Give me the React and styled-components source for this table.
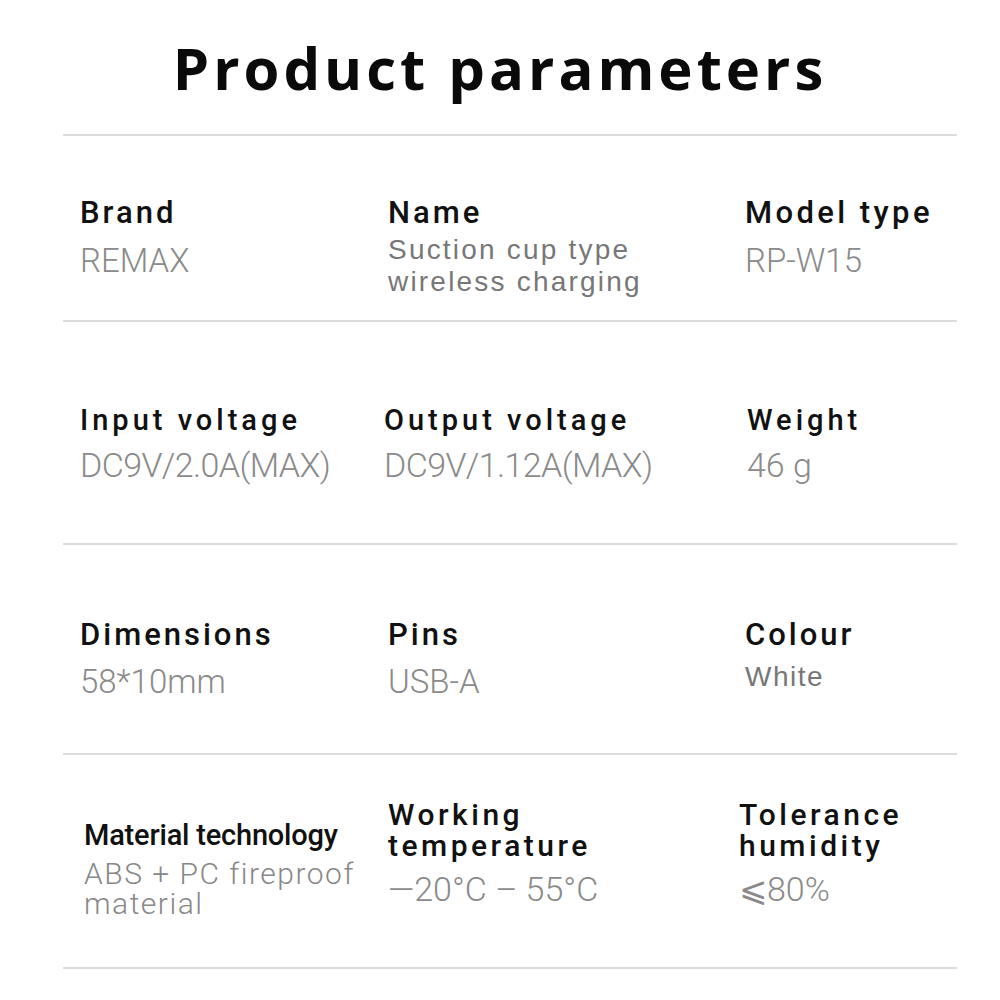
import React from "react";
import styled, { createGlobalStyle } from "styled-components";

const GlobalStyle = createGlobalStyle`
  html, body {
    margin: 0;
    padding: 0;
    background: #ffffff;
  }
`;

const Page = styled.div`
  width: 1000px;
  height: 1000px;
  background: #fff;
  overflow: hidden;
`;

const Title = styled.h1`
  margin: 0;
  padding-top: 32px;
  height: 134px;
  box-sizing: border-box;
  text-align: center;
  font-family: "Open Sans", "Noto Sans", sans-serif;
  font-weight: 700;
  font-size: 58px;
  line-height: 72px;
  letter-spacing: 4px;
  color: #0a0a0a;
`;

const Table = styled.div`
  margin: 0 43px 0 63px;
  border-bottom: 2px solid #dcdcdc;
`;

const Row = styled.div`
  display: grid;
  grid-template-columns: 308px 357px 1fr;
  height: ${(p) => p.$height}px;
  box-sizing: border-box;
  padding: ${(p) => p.$pad}px 0 0 17px;
  border-top: 2px solid #dcdcdc;
  align-items: start;
`;

const Cell = styled.div`
  display: flex;
  flex-direction: column;
  margin-top: ${(p) => p.$offset || 0}px;
  margin-left: ${(p) => p.$shift || 0}px;
`;

const Label = styled.div`
  font-family: Roboto, "Liberation Sans", Arial, sans-serif;
  font-size: ${(p) => p.$size || 31}px;
  line-height: ${(p) => p.$lh || 38}px;
  letter-spacing: ${(p) => p.$spacing ?? 3}px;
  font-weight: 500;
  color: #111;
  white-space: pre-line;
`;

const Value = styled.div`
  margin-top: ${(p) => p.$gap || 0}px;
  font-family: ${(p) =>
    p.$plain ? `"Liberation Sans", Arial, sans-serif` : `Roboto, "Noto Sans", sans-serif`};
  font-weight: ${(p) => (p.$plain ? 400 : 300)};
  font-size: ${(p) => p.$size || 33}px;
  line-height: ${(p) => p.$lh || 40}px;
  letter-spacing: ${(p) => p.$spacing ?? 0}px;
  color: ${(p) => p.$color || "#8a8a8a"};
  white-space: pre-line;
`;

const rows = [
  {
    height: 186,
    pad: 58,
    cells: [
      { label: "Brand", value: "REMAX", gap: 9 },
      {
        label: "Name",
        value: "Suction cup type\nwireless charging",
        plain: true,
        vSize: 28,
        vLh: 32,
        vSpacing: 2.2,
        color: "#777",
        gap: 2,
      },
      { label: "Model type", value: "RP-W15", gap: 9, spacing: 3.4 },
    ],
  },
  {
    height: 223,
    pad: 79,
    cells: [
      { label: "Input voltage", value: "DC9V/2.0A(MAX)", size: 29, spacing: 4, gap: 6, vSize: 34, vSpacing: -0.6 },
      { label: "Output voltage", value: "DC9V/1.12A(MAX)", size: 29, spacing: 4, gap: 6, vSize: 34, vSpacing: -0.6, shift: -4 },
      { label: "Weight", value: "46 g", size: 29, spacing: 4, gap: 6, vSize: 34, shift: 2 },
    ],
  },
  {
    height: 210,
    pad: 71,
    cells: [
      { label: "Dimensions", value: "58*10mm", gap: 8 },
      { label: "Pins", value: "USB-A", gap: 8 },
      {
        label: "Colour",
        value: "White",
        plain: true,
        vSize: 28,
        vLh: 34,
        vSpacing: 1.5,
        color: "#777",
        gap: 6,
      },
    ],
  },
  {
    height: 214,
    pad: 44,
    cells: [
      {
        label: "Material technology",
        value: "ABS + PC fireproof\nmaterial",
        size: 29,
        lh: 31,
        spacing: -0.2,
        offset: 21,
        shift: 4,
        vSize: 30,
        vLh: 30,
        vSpacing: 1.5,
        color: "#888",
        gap: 8,
      },
      {
        label: "Working\ntemperature",
        value: "—20°C – 55°C",
        size: 30,
        lh: 31,
        spacing: 3.5,
        gap: 8,
        vSize: 34,
      },
      {
        label: "Tolerance\nhumidity",
        value: "⩽80%",
        size: 30,
        lh: 31,
        spacing: 3.5,
        gap: 8,
        vSize: 34,
        shift: -6,
      },
    ],
  },
];

export default function App() {
  return (
    <Page>
      <GlobalStyle />
      <Title>Product parameters</Title>
      <Table>
        {rows.map((row, ri) => (
          <Row key={ri} $height={row.height} $pad={row.pad}>
            {row.cells.map((c, ci) => (
              <Cell key={ci} $offset={c.offset} $shift={c.shift}>
                <Label $size={c.size} $lh={c.lh} $spacing={c.spacing}>
                  {c.label}
                </Label>
                <Value
                  $gap={c.gap}
                  $plain={c.plain}
                  $size={c.vSize}
                  $lh={c.vLh}
                  $spacing={c.vSpacing}
                  $color={c.color}
                >
                  {c.value}
                </Value>
              </Cell>
            ))}
          </Row>
        ))}
      </Table>
    </Page>
  );
}
